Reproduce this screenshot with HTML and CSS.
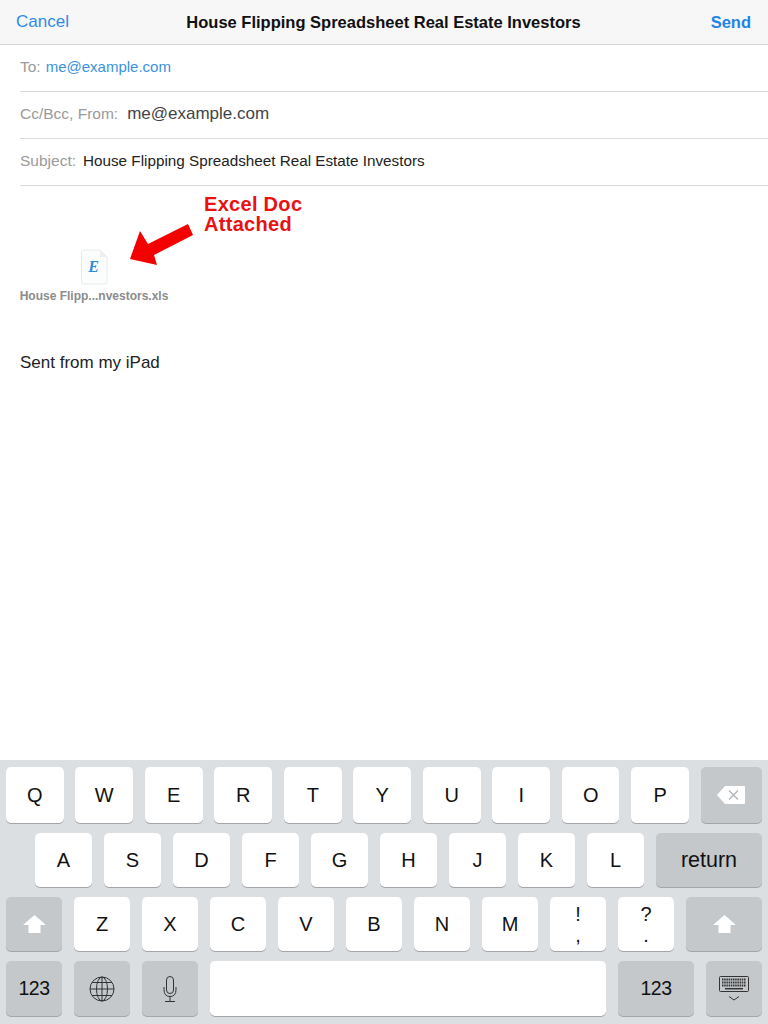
FILE: index.html
```html
<!DOCTYPE html>
<html lang="en">
<head>
    <meta charset="UTF-8">
    <meta name="viewport" content="width=device-width, initial-scale=1.0">
    <title>New Message</title>
    <link rel="stylesheet" href="styles.css">
</head>
<body>
    <div class="navbar">
        <a class="nav-cancel">Cancel</a>
        <div class="nav-title">House Flipping Spreadsheet Real Estate Investors</div>
        <a class="nav-send">Send</a>
    </div>

    <div class="field-row">
        <span class="field-label">To:</span>
        <span class="to-value">me@example.com</span>
    </div>
    <div class="field-row from-row">
        <span class="field-label">Cc/Bcc, From:</span>
        <span class="from-value">me@example.com</span>
    </div>
    <div class="field-row">
        <span class="field-label">Subject:</span>
        <span class="subject-value">House Flipping Spreadsheet Real Estate Investors</span>
    </div>

    <div class="message-body">
        <!-- red note drawn on top of the screenshot -->
        <div class="note-text">Excel Doc<br>Attached</div>
        <svg class="note-arrow" width="70" height="46" viewBox="0 0 70 46">
            <polygon points="0,37 10,9 18,22 58,2 63,13 24,33 27,43" fill="#f40000"/>
        </svg>

        <div class="attachment">
            <svg class="file-icon" width="28" height="36" viewBox="0 0 28 36">
                <path d="M1.5 3 Q1.5 1 3.5 1 H20 L27 8 V33 Q27 35 25 35 H3.5 Q1.5 35 1.5 33 Z" fill="#fbfcfc" stroke="#e8eaeb"/>
                <path d="M20 1 V8 H27 Z" fill="#eceeef"/>
                <text x="13.5" y="23" class="file-letter">E</text>
            </svg>
            <div class="file-name">House Flipp...nvestors.xls</div>
        </div>
        <div class="signature">Sent from my iPad</div>
    </div>

    <div class="keyboard">
        <div class="key-row row-one">
            <div class="key">Q</div><div class="key">W</div><div class="key">E</div><div class="key">R</div><div class="key">T</div>
            <div class="key">Y</div><div class="key">U</div><div class="key">I</div><div class="key">O</div><div class="key">P</div>
            <div class="key dark-key delete-key">
                <svg width="30" height="20" viewBox="0 0 30 20">
                    <path d="M9 1 H28 Q29 1 29 2 V18 Q29 19 28 19 H9 L1 10 Z" fill="#fff"/>
                    <path d="M13 5.5 L22 14.5 M22 5.5 L13 14.5" stroke="#b4b8bc" stroke-width="1.5"/>
                </svg>
            </div>
        </div>
        <div class="key-row row-two">
            <div class="key">A</div><div class="key">S</div><div class="key">D</div><div class="key">F</div><div class="key">G</div>
            <div class="key">H</div><div class="key">J</div><div class="key">K</div><div class="key">L</div>
            <div class="key dark-key return-key">return</div>
        </div>
        <div class="key-row row-three">
            <div class="key dark-key">
                <svg width="23" height="18" viewBox="0 0 23 18"><path d="M11.5 0 L23 10 H17.5 V18 H5.5 V10 H0 Z" fill="#fff"/></svg>
            </div>
            <div class="key">Z</div><div class="key">X</div><div class="key">C</div><div class="key">V</div>
            <div class="key">B</div><div class="key">N</div><div class="key">M</div>
            <div class="key stacked-key"><span>!</span><span>,</span></div>
            <div class="key stacked-key"><span>?</span><span>.</span></div>
            <div class="key dark-key wide-key">
                <svg width="23" height="18" viewBox="0 0 23 18"><path d="M11.5 0 L23 10 H17.5 V18 H5.5 V10 H0 Z" fill="#fff"/></svg>
            </div>
        </div>
        <div class="key-row row-four">
            <div class="key dark-key number-key">123</div>
            <div class="key dark-key">
                <svg width="26" height="26" viewBox="0 0 26 26" fill="none" stroke="#333" stroke-width="1">
                    <circle cx="13" cy="13" r="12"/>
                    <ellipse cx="13" cy="13" rx="5.5" ry="12"/>
                    <path d="M13 1 V25 M1 13 H25 M3 6.5 H23 M3 19.5 H23"/>
                </svg>
            </div>
            <div class="key dark-key">
                <svg width="14" height="26" viewBox="0 0 14 26" fill="none" stroke="#333" stroke-width="1">
                    <rect x="3.5" y="0.5" width="7" height="17" rx="3.5"/>
                    <path d="M1 11 V13.5 Q1 20.5 7 20.5 Q13 20.5 13 13.5 V11 M7 20.5 V25 M2 25.5 H12"/>
                </svg>
            </div>
            <div class="key space-key"></div>
            <div class="key dark-key wide-key number-key">123</div>
            <div class="key dark-key">
                <svg width="30" height="26" viewBox="0 0 30 26" fill="none" stroke="#333" stroke-width="1">
                    <rect x="0.5" y="0.5" width="29" height="15" rx="1"/>
                    <path d="M3 3.5 H27 M3 6.5 H27 M3 9.5 H27" stroke-width="2" stroke-dasharray="1.5 0.7"/>
                    <path d="M6 12.7 H24" stroke-width="1.5"/>
                    <path d="M10 20.5 L15 24 L20 20.5"/>
                </svg>
            </div>
        </div>
    </div>
</body>
</html>
```

FILE: styles.css
```css
body {
    font-family: "Liberation Sans", Arial, sans-serif;
    margin: 0;
    padding: 0;
    width: 768px;
    height: 1024px;
    overflow: hidden;
    background-color: #ffffff;
    display: flex;
    flex-direction: column;
}
.navbar {
    height: 44px;
    background-color: #f7f7f7;
    border-bottom: 1px solid #d8d8d8;
    padding: 0 17px 0 16px;
    display: grid;
    grid-template-columns: 1fr auto 1fr;
    align-items: center;
    flex-shrink: 0;
}
.nav-cancel {
    color: #2f8be6;
    font-size: 17px;
}
.nav-title {
    color: #111111;
    font-size: 16.5px;
    font-weight: bold;
}
.nav-send {
    color: #1f84e4;
    font-size: 16.5px;
    font-weight: bold;
    text-align: right;
}
.field-row {
    height: 33px;
    padding-top: 13px;
    margin-left: 20px;
    border-bottom: 1px solid #d9d9d9;
    display: flex;
    align-items: baseline;
    flex-shrink: 0;
}
.from-row {
    height: 34px;
    padding-top: 12px;
}
.field-label {
    color: #9a9a9a;
    font-size: 15.5px;
}
.to-value {
    color: #3a92e0;
    font-size: 15px;
    margin-left: 5px;
}
.from-value {
    color: #444444;
    font-size: 17px;
    margin-left: 9px;
}
.subject-value {
    color: #222222;
    font-size: 15.25px;
    margin-left: 7px;
}
.message-body {
    position: relative;
    flex: 1;
    padding: 63px 0 0 20px;
}
.note-text {
    position: absolute;
    left: 204px;
    top: 8px;
    color: #e81212;
    font-size: 20px;
    font-weight: bold;
    line-height: 20px;
    letter-spacing: 0.3px;
}
.note-arrow {
    position: absolute;
    left: 130px;
    top: 36px;
}
.attachment {
    width: 148px;
    display: flex;
    flex-direction: column;
    align-items: center;
}
.file-icon {
    display: block;
}
.file-letter {
    font-family: "Liberation Serif", serif;
    font-size: 16px;
    font-style: italic;
    font-weight: bold;
    fill: #2a8ae0;
    text-anchor: middle;
}
.file-name {
    color: #8c8c8c;
    font-size: 12px;
    font-weight: bold;
    margin-top: 4px;
    white-space: nowrap;
}
.signature {
    color: #222222;
    font-size: 17px;
    margin-top: 50px;
}
.keyboard {
    height: 264px;
    box-sizing: border-box;
    background-color: #dcdfe2;
    padding: 7px 6px 0 6px;
    flex-shrink: 0;
    display: flex;
    flex-direction: column;
    gap: 10px;
}
.key-row {
    display: flex;
    gap: 12px;
    height: 54px;
}
.row-one {
    gap: 11.9px;
    height: 56px;
}
.row-two {
    padding-left: 29px;
}
.row-four {
    height: 55px;
}
.key {
    width: 57px;
    background-color: #ffffff;
    color: #111111;
    border-radius: 5px;
    box-shadow: 0 1px 0 #a2a5a9;
    font-size: 20px;
    display: flex;
    align-items: center;
    justify-content: center;
    flex-shrink: 0;
}
.row-one .key {
    width: 57.6px;
}
.row-three .key,
.row-four .key {
    width: 56px;
}
.dark-key {
    background-color: #c4c8cb;
}
.row-one .delete-key {
    width: 61px;
}
.return-key {
    width: 106px;
    font-size: 21.5px;
}
.row-three .wide-key,
.row-four .wide-key {
    width: 76px;
}
.row-four .space-key {
    width: 396px;
}
.number-key {
    font-size: 19.5px;
    letter-spacing: -0.5px;
}
.stacked-key {
    flex-direction: column;
    gap: 1px;
    line-height: 20px;
}
```
